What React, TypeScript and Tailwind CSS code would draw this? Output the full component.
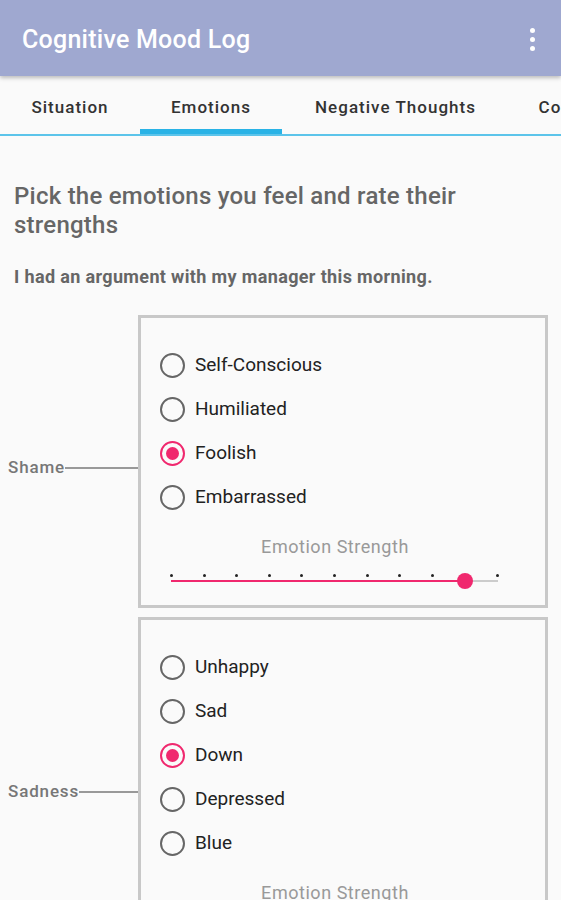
import React from "react";

const groups = [
  { name: "Shame", options: ["Self-Conscious", "Humiliated", "Foolish", "Embarrassed"], picked: "Foolish", value: 9 },
  { name: "Sadness", options: ["Unhappy", "Sad", "Down", "Depressed", "Blue"], picked: "Down", value: 9 },
];

const tabs = [
  { label: "Situation", w: "w-[140px]" },
  { label: "Emotions", w: "w-[142px]", active: true },
  { label: "Negative Thoughts", w: "w-[227px]" },
  { label: "Cognitive Distortions", w: "w-[240px]" },
];

export default function App() {
  return <div className="h-[900px] w-[561px] overflow-hidden bg-[#fafafa] font-['Roboto',sans-serif]">
    <header className="relative z-10 flex h-[76px] items-center justify-between bg-[#9fa8d0] pl-[22px] pr-[22px] pt-[3px] shadow-[0_2px_4px_rgba(0,0,0,0.25)]">
      <h1 className="text-[25px] font-medium tracking-[0.01em] text-white">Cognitive Mood Log</h1>
      <div className="flex flex-col gap-[4px] pr-[4px]">
        <span className="h-[5px] w-[5px] rounded-full bg-white" />
        <span className="h-[5px] w-[5px] rounded-full bg-white" />
        <span className="h-[5px] w-[5px] rounded-full bg-white" />
      </div>
    </header>

    <nav className="flex h-[60px] overflow-hidden whitespace-nowrap border-b-2 border-[#5cc4ea] bg-[#fafafa]">
      {tabs.map((t) => <div key={t.label} className={`${t.w} relative flex shrink-0 items-center justify-center pt-[5px] text-[17px] font-medium tracking-[0.06em] text-[#333]`}>
        {t.label}
        {t.active && <span className="absolute bottom-0 left-0 right-0 h-[5px] bg-[#29b3e6]" />}
      </div>)}
    </nav>

    <section className="px-[14px] pt-[46px]">
      <h2 className="max-w-[470px] text-[24px] font-medium leading-[29px] tracking-[0.01em] text-[#666]">Pick the emotions you feel and rate their strengths</h2>
      <p className="mt-[23px] text-[18px] font-bold tracking-[0.02em] text-[#666]">I had an argument with my manager this morning.</p>
    </section>

    <div className="mt-[25px] flex flex-col gap-[9px] pr-[13px]">
      {groups.map((g) => <EmotionGroup key={g.name} {...g} />)}
    </div>
  </div>;
}

function EmotionGroup({ name, options, picked, value }: { name: string; options: string[]; picked: string; value: number }) {
  return <div className="flex">
    <div className="flex w-[138px] shrink-0 items-center pl-[8px] pt-[12px]">
      <span className="text-[17px] font-medium tracking-[0.05em] text-[#777]">{name}</span>
      <span className="h-[2px] flex-1 bg-[#999]" />
    </div>
    <div className="flex-1 border-[3px] border-[#c8c8c8] pb-[11px] pt-[25px]">
      {options.map((o) => <div key={o} className="flex h-[44px] items-center pl-[19px]">
        <Radio on={o === picked} />
        <span className="ml-[10px] text-[19px] text-[#222]">{o}</span>
      </div>)}
      <div className="mt-[14px] pr-[16px] text-center text-[18px] tracking-[0.03em] text-[#999]">Emotion Strength</div>
      <Slider value={value} />
    </div>
  </div>;
}

function Radio({ on }: { on: boolean }) {
  return <span className={on ? "flex h-[25px] w-[25px] items-center justify-center rounded-full border-2 border-[#f0286e]" : "flex h-[25px] w-[25px] rounded-full border-2 border-[#666]"}>
    {on && <span className="h-[13px] w-[13px] rounded-full bg-[#f0286e]" />}
  </span>;
}

function Slider({ value }: { value: number }) {
  const pct = (value / 10) * 100;
  return <div className="relative ml-[30px] mt-[14px] h-[20px] w-[327px]">
    <div className="absolute left-[-1px] right-[-1px] top-0 flex justify-between">
      {Array.from({ length: 11 }).map((_, i) => <span key={i} className="h-[3px] w-[3px] rounded-full bg-[#222]" />)}
    </div>
    <div className="absolute left-0 right-0 top-[6px] h-[2px] bg-[#ccc]" />
    <div className="absolute left-0 top-[6px] h-[2px] bg-[#f0286e]" style={{ width: `${pct}%` }} />
    <div className="absolute top-[-1px] h-[16px] w-[16px] -translate-x-1/2 rounded-full bg-[#f0286e]" style={{ left: `${pct}%` }} />
  </div>;
}
